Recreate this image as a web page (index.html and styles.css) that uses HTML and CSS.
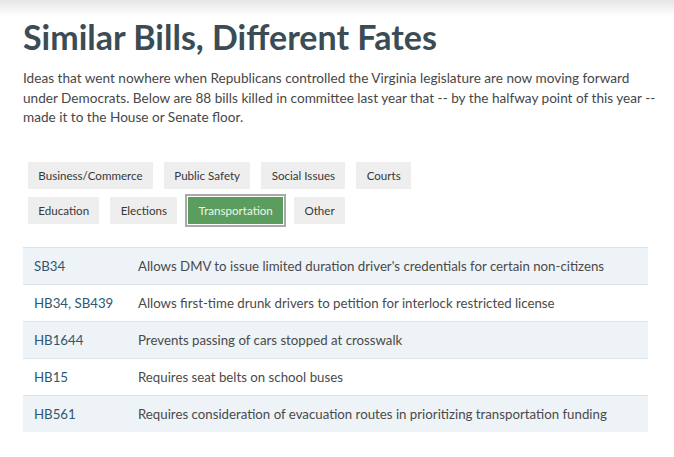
FILE: index.html
```html
<!DOCTYPE html>
<html lang="en">
<head>
<meta charset="utf-8">
<title>Similar Bills, Different Fates</title>
<link rel="stylesheet" href="styles.css">
</head>
<body>
<div class="topshade"></div>
<main class="page">
  <h1 class="title">Similar Bills, Different Fates</h1>
  <p class="intro">Ideas that went nowhere when Republicans controlled the Virginia legislature are now moving forward<br>under Democrats. Below are 88 bills killed in committee last year that -- by the halfway point of this year -- made it to the House or Senate floor.</p>
  <div class="filters">
    <button class="chip">Business/Commerce</button>
    <button class="chip">Public Safety</button>
    <button class="chip">Social Issues</button>
    <button class="chip">Courts</button>
    <button class="chip">Education</button>
    <button class="chip">Elections</button>
    <button class="chip chip-active">Transportation</button>
    <button class="chip">Other</button>
  </div>
  <table class="bills">
    <tbody>
      <tr><td class="bill-id">SB34</td><td class="bill-desc">Allows DMV to issue limited duration driver's credentials for certain non-citizens</td></tr>
      <tr><td class="bill-id">HB34, SB439</td><td class="bill-desc">Allows first-time drunk drivers to petition for interlock restricted license</td></tr>
      <tr><td class="bill-id">HB1644</td><td class="bill-desc">Prevents passing of cars stopped at crosswalk</td></tr>
      <tr><td class="bill-id">HB15</td><td class="bill-desc">Requires seat belts on school buses</td></tr>
      <tr><td class="bill-id">HB561</td><td class="bill-desc">Requires consideration of evacuation routes in prioritizing transportation funding</td></tr>
    </tbody>
  </table>
</main>
</body>
</html>
```

FILE: styles.css
```css
html, body {
  margin: 0;
  padding: 0;
  background: #ffffff;
}
body {
  font-family: Lato, "Open Sans", sans-serif;
  color: #444;
}
.topshade {
  height: 16px;
  background: linear-gradient(#e6e6e6, #ffffff);
}
.page {
  padding: 0 26px 0 23px;
}
.title {
  margin: 1px 0 0 0;
  font-size: 34px;
  line-height: 40px;
  font-weight: 700;
  color: #3b4c55;
}
.intro {
  margin: 12px -14px 0 0;
  font-size: 13.6px;
  line-height: 19.5px;
  color: #474747;
}
.filters {
  display: flex;
  flex-wrap: wrap;
  gap: 8px 11px;
  margin-top: 34px;
  padding-left: 5px;
  width: 400px;
}
.chip {
  font-family: Lato, "Open Sans", sans-serif;
  font-size: 11.6px;
  height: 27px;
  padding: 0 10.3px;
  border: none;
  background: #eeeeee;
  color: #383838;
  cursor: pointer;
}
.chip-active {
  background: #5b9d5e;
  color: #eef7e8;
  box-shadow: 0 0 0 1px #ffffff, 0 0 0 3px #a9a9a9;
}
.bills {
  width: 100%;
  margin-top: 23px;
  border-collapse: collapse;
  font-size: 13.25px;
}
.bills tr {
  height: 37px;
  border-top: 1px solid #dfe4e8;
}
.bills tr:nth-child(odd) {
  background: #edf3f7;
}
.bill-id {
  width: 104px;
  padding: 0 0 0 11px;
  color: #2d5870;
}
.bill-desc {
  padding: 0;
  color: #4a4a4a;
}
```
